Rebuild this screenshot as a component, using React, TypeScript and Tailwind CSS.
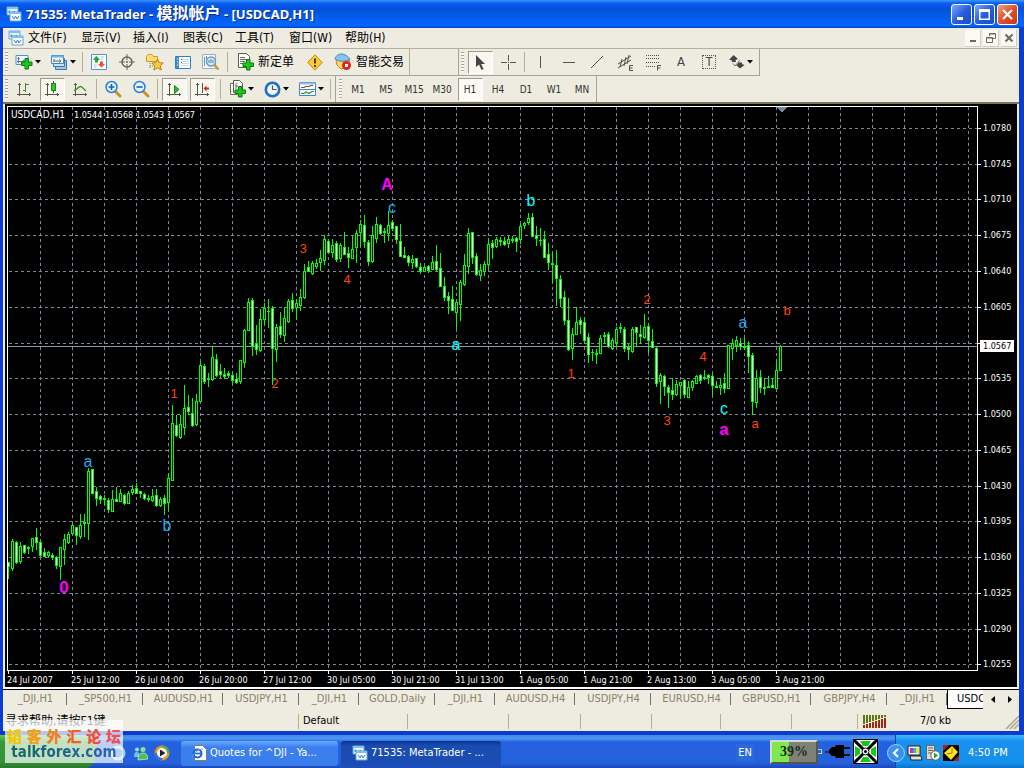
import React from "react";

/* [high, low, bodyTop, bodyBottom, bearish] in chart units, one entry per hour */
type Candle = [number, number, number, number, number];

const CANDLES: Candle[] = [
  [562, 579, 562, 566, 1], [539, 571, 541, 568, 0], [541, 564, 542, 562, 1], [542, 564, 546, 561, 0],
  [545, 554, 545, 552, 1], [546, 554, 547, 548, 1], [538, 552, 538, 546, 0], [528, 550, 537, 542, 1],
  [540, 557, 542, 555, 1], [548, 556, 552, 556, 1], [551, 558, 552, 555, 0], [553, 560, 555, 557, 1],
  [556, 569, 557, 565, 1], [547, 580, 547, 566, 0], [534, 565, 539, 549, 0], [532, 544, 534, 542, 0],
  [523, 535, 525, 533, 0], [527, 545, 527, 535, 1], [514, 539, 525, 536, 0], [514, 537, 522, 523, 1],
  [468, 540, 471, 523, 0], [469, 494, 469, 493, 1], [487, 506, 491, 498, 1], [495, 504, 496, 499, 1],
  [495, 505, 498, 499, 1], [498, 513, 500, 509, 1], [490, 511, 499, 511, 0], [487, 502, 499, 501, 1],
  [489, 502, 493, 501, 0], [494, 505, 495, 503, 1], [491, 504, 493, 503, 0], [485, 495, 489, 492, 0],
  [483, 494, 488, 493, 1], [491, 498, 491, 493, 1], [493, 500, 494, 498, 1], [495, 502, 498, 499, 1],
  [489, 502, 496, 500, 0], [489, 507, 495, 505, 1], [497, 507, 499, 505, 0], [495, 515, 498, 503, 1],
  [473, 510, 478, 502, 0], [405, 481, 423, 480, 0], [415, 437, 425, 435, 1], [415, 439, 424, 437, 0],
  [385, 435, 408, 427, 0], [395, 415, 407, 411, 1], [398, 427, 413, 425, 1], [394, 426, 401, 424, 0],
  [361, 401, 365, 401, 0], [364, 384, 366, 381, 1], [373, 387, 379, 379, 1], [347, 381, 357, 379, 0],
  [354, 377, 359, 375, 1], [364, 378, 371, 374, 1], [368, 379, 374, 376, 1], [371, 378, 373, 375, 1],
  [373, 384, 375, 380, 1], [373, 384, 379, 382, 1], [360, 384, 360, 381, 0], [329, 368, 330, 362, 0],
  [298, 331, 302, 330, 0], [298, 356, 300, 346, 1], [325, 355, 343, 349, 1], [309, 352, 319, 350, 0],
  [303, 325, 308, 319, 0], [299, 328, 311, 311, 1], [306, 385, 308, 348, 1], [324, 362, 327, 349, 0],
  [312, 338, 326, 334, 1], [307, 342, 318, 335, 0], [299, 323, 301, 321, 0], [293, 312, 300, 308, 1],
  [299, 319, 303, 307, 0], [289, 311, 297, 305, 0], [264, 299, 271, 297, 0], [261, 271, 267, 271, 1],
  [261, 275, 263, 273, 0], [259, 269, 263, 266, 0], [250, 271, 258, 262, 0], [235, 265, 239, 260, 0],
  [239, 254, 241, 252, 1], [239, 258, 245, 252, 0], [241, 262, 243, 259, 1], [243, 262, 245, 258, 0],
  [232, 255, 247, 254, 1], [247, 268, 253, 257, 1], [236, 258, 249, 258, 0], [230, 263, 233, 247, 0],
  [220, 247, 224, 232, 0], [215, 248, 225, 241, 1], [240, 266, 242, 261, 1], [226, 263, 235, 261, 0],
  [217, 243, 224, 238, 0], [224, 235, 225, 233, 1], [228, 243, 231, 232, 1], [211, 241, 225, 233, 0],
  [220, 231, 222, 228, 1], [226, 244, 226, 239, 1], [224, 256, 241, 256, 1], [247, 258, 255, 257, 1],
  [255, 266, 256, 262, 1], [255, 269, 259, 262, 0], [258, 268, 258, 266, 1], [263, 274, 267, 271, 1],
  [266, 272, 267, 271, 0], [265, 273, 266, 270, 1], [256, 270, 262, 269, 0], [245, 271, 261, 269, 1],
  [253, 287, 268, 286, 1], [277, 301, 286, 297, 1], [292, 314, 296, 300, 1], [286, 311, 299, 310, 1],
  [302, 329, 302, 312, 0], [280, 321, 282, 304, 0], [254, 286, 265, 284, 0], [228, 274, 233, 266, 0],
  [232, 264, 232, 257, 1], [253, 276, 256, 274, 1], [264, 281, 270, 275, 0], [261, 276, 264, 271, 0],
  [238, 270, 244, 264, 0], [240, 259, 243, 247, 1], [237, 248, 239, 246, 0], [237, 246, 240, 241, 1],
  [237, 246, 241, 244, 1], [236, 248, 239, 243, 0], [236, 243, 239, 240, 1], [237, 252, 238, 241, 1],
  [224, 244, 226, 239, 0], [222, 229, 223, 225, 0], [213, 225, 218, 222, 0], [213, 237, 217, 236, 1],
  [226, 246, 235, 238, 1], [228, 246, 240, 240, 1], [231, 258, 239, 257, 1], [243, 270, 254, 262, 1],
  [252, 283, 263, 264, 1], [250, 306, 265, 278, 1], [275, 307, 279, 298, 1], [291, 325, 297, 320, 1],
  [298, 351, 320, 349, 1], [328, 360, 334, 348, 0], [307, 334, 322, 334, 0], [317, 334, 320, 324, 1],
  [317, 344, 322, 340, 1], [333, 363, 337, 354, 1], [349, 361, 352, 352, 1], [349, 364, 353, 354, 1],
  [335, 353, 338, 353, 0], [332, 344, 335, 336, 1], [332, 348, 334, 346, 1], [338, 350, 340, 348, 0],
  [327, 347, 329, 342, 0], [323, 333, 327, 328, 1], [327, 352, 329, 348, 1], [344, 360, 347, 349, 1],
  [327, 353, 329, 351, 0], [327, 346, 327, 332, 1], [325, 344, 334, 336, 1], [314, 339, 327, 337, 0],
  [323, 353, 326, 340, 1], [329, 348, 341, 347, 1], [347, 387, 348, 383, 1], [373, 404, 375, 381, 0],
  [375, 396, 376, 386, 1], [385, 408, 387, 392, 1], [378, 400, 390, 394, 1], [380, 396, 384, 394, 0],
  [382, 399, 382, 385, 0], [379, 398, 380, 394, 1], [381, 397, 387, 397, 0], [380, 391, 381, 387, 0],
  [375, 384, 376, 383, 0], [374, 384, 375, 380, 1], [370, 380, 377, 378, 1], [374, 384, 375, 377, 1],
  [374, 395, 376, 385, 1], [381, 388, 386, 387, 1], [378, 395, 385, 387, 0], [373, 393, 383, 388, 1],
  [345, 389, 345, 388, 0], [339, 360, 343, 348, 0], [336, 352, 340, 345, 0], [338, 350, 343, 346, 1],
  [338, 350, 346, 347, 1], [341, 373, 345, 356, 1], [353, 415, 355, 401, 1], [370, 408, 378, 402, 0],
  [370, 393, 377, 387, 1], [378, 395, 387, 388, 1], [376, 388, 386, 387, 1], [378, 388, 385, 387, 1],
  [359, 388, 370, 388, 0], [345, 371, 346, 370, 0],
];

const PRICES: [string, number][] = [
  ["1.0780", 128], ["1.0745", 164], ["1.0710", 199], ["1.0675", 235], ["1.0640", 271], ["1.0605", 307],
  ["", 343], ["1.0535", 378], ["1.0500", 414], ["1.0465", 450], ["1.0430", 486], ["1.0395", 521],
  ["1.0360", 557], ["1.0325", 593], ["1.0290", 629], ["1.0255", 664],
];

const TIMES = [
  "24 Jul 2007", "25 Jul 12:00", "26 Jul 04:00", "26 Jul 20:00", "27 Jul 12:00", "30 Jul 05:00", "30 Jul 21:00",
  "31 Jul 13:00", "1 Aug 05:00", "1 Aug 21:00", "2 Aug 13:00", "3 Aug 05:00", "3 Aug 21:00",
];

/* [text, centre x, baseline, size, colour, bold] */
const WAVES: [string, number, number, number, string, boolean][] = [
  ["0", 64, 593, 17, "#ff00ff", true],
  ["a", 88, 467, 16, "#1eaaf0", false],
  ["b", 167, 531, 16, "#1eaaf0", false],
  ["1", 174, 398, 13, "#ff4500", false],
  ["2", 275, 388, 13, "#ff4500", false],
  ["3", 303, 253, 13, "#ff4500", false],
  ["4", 347, 284, 13, "#ff4500", false],
  ["A", 387, 190, 16, "#ff00ff", true],
  ["c", 392, 213, 16, "#1eaaf0", false],
  ["a", 456, 350, 16, "#00ffff", false],
  ["b", 531, 206, 16, "#00ffff", false],
  ["1", 571, 378, 13, "#ff4500", false],
  ["2", 647, 304, 13, "#ff4500", false],
  ["3", 667, 425, 13, "#ff4500", false],
  ["4", 703, 361, 13, "#ff4500", false],
  ["a", 743, 328, 16, "#1eaaf0", false],
  ["b", 787, 315, 13, "#ff4500", false],
  ["a", 755, 428, 13, "#ff4500", false],
  ["c", 724, 414, 16, "#00ffff", false],
  ["a", 724, 435, 17, "#ff00ff", true],
];

function Chart() {
  return (
    <svg
      viewBox="5 104 1012 583"
      className="block h-auto w-full bg-black font-['DejaVu_Sans_Condensed','DejaVu_Sans',sans-serif]"
      role="img"
      aria-label="USDCAD hourly chart"
    >
      <g shapeRendering="crispEdges">
        {PRICES.map(([, y]) => (
          <line key={y} x1="9" x2="977" y1={y + 0.5} y2={y + 0.5} stroke="#778899" strokeDasharray="3 3" />
        ))}
        {Array.from({ length: 30 }, (_, i) => 40 + i * 32).map((x) => (
          <line key={x} x1={x + 0.5} x2={x + 0.5} y1="107" y2="670" stroke="#83839b" strokeDasharray="3 3" />
        ))}
        <line x1="8" x2="977" y1="346.5" y2="346.5" stroke="#8c99a6" />
        <path d="M776 107h12l-6 5z" fill="#778899" />
      </g>
      <g>
        {WAVES.map(([t, x, y, size, color, bold]) => (
          <text
            key={`${t}${x}`}
            x={x}
            y={y}
            fontSize={size}
            fill={color}
            fontWeight={bold ? 700 : 400}
            textAnchor="middle"
            className="font-['Liberation_Sans',Arial,sans-serif]"
          >
            {t}
          </text>
        ))}
      </g>
      <g shapeRendering="crispEdges">
        {CANDLES.map(([hi, lo, top, bottom, bear], i) => {
          const x = 8 + i * 4;
          return (
            <g key={x}>
              <rect x={x} y={hi} width="1" height={Math.max(1, lo - hi)} fill="#00ff00" />
              <rect x={x - 1} y={top} width="3" height={bottom - top + 1} fill="#00ff00" />
              {bottom - top > 1 && (
                <rect x={x} y={top + 1} width="1" height={bottom - top - 1} fill={bear ? "#ffffff" : "#000000"} />
              )}
            </g>
          );
        })}
        <path d="M5 104h2.5v567H5z" fill="#000000" />
        <path d="M7.500 670.500V106.500H977.500V670.500z" fill="none" stroke="#ffffff" />
        {PRICES.map(([, y]) => (
          <rect key={y} x="978" y={y} width="3" height="1" fill="#ffffff" />
        ))}
        {TIMES.map((t, i) => (
          <rect key={t} x={8 + i * 64} y="671" width="1" height="3" fill="#ffffff" />
        ))}
        <rect x="980" y="340" width="34" height="12" fill="#ffffff" />
      </g>
      <g fontSize="9" fill="#ffffff">
        <text x="11" y="118" fontSize="10">USDCAD,H1</text>
        <text x="74" y="118">1.0544 1.0568 1.0543 1.0567</text>
        {PRICES.map(([t, y]) => (
          <text key={y} x="983" y={y + 3}>{t}</text>
        ))}
        <text x="983" y="349" fill="#000000">1.0567</text>
        {TIMES.map((t, i) => (
          <text key={t} x={7 + i * 64} y="683">{t}</text>
        ))}
      </g>
    </svg>
  );
}

/* ---------- icons ---------- */

function AppIcon() {
  return (
    <svg width="16" height="16" viewBox="0 0 16 16" aria-hidden="true" className="shrink-0">
      <path d="M1 1h11v8H1z" fill="#e8f4ff" stroke="#5fa8e0" />
      <path d="M1 1h11v2H1z" fill="#7fc0f0" />
      <path d="M3 7V5h1v2M7 5v2l2-2" stroke="#2f7fc8" fill="none" />
      <path d="M4 6h11v9H4z" fill="#ffffff" stroke="#5fa8e0" />
      <path d="M4 6h11v2H4z" fill="#7fc0f0" />
      <path d="M6 10l2 3 1.500-3 1.500 3 2-3" stroke="#2f7fc8" fill="none" />
    </svg>
  );
}

function Plus({ x = 0, y = 0 }: { x?: number; y?: number }) {
  return (
    <path
      transform={`translate(${x} ${y})`}
      d="M4 .5h3.500v3.500h3.500v3.500h-3.500v3.500H4v-3.500H.5V4H4z"
      fill="#1fc41f"
      stroke="#0b7a12"
    />
  );
}

const ICONS = {
  newChart: (
    <svg width="18" height="16" viewBox="0 0 18 16">
      <path d="M1 1.500h12v9H1z" fill="#eef8ff" stroke="#4d94c4" />
      <path d="M3.500 3v6M2 7.500h8M2.500 4.500h2M8 6l2 1.500L8 9" stroke="#55708a" fill="none" />
      <Plus x={6} y={4} />
    </svg>
  ),
  profiles: (
    <svg width="18" height="17" viewBox="0 0 18 17">
      <path d="M5.500 6.500h11v9h-11z" fill="#9cc8ec" stroke="#3f78b0" />
      <path d="M3.500 4.500h11v8h-11z" fill="#c5e2f8" stroke="#3f78b0" />
      <path d="M1.500 1.500h12v8h-12z" fill="#f2faff" stroke="#3f88c0" />
      <path d="M1.500 1.500h12v2h-12z" fill="#6fb2e4" />
      <path d="M4 5v3M3 7h8M9 5.500L11 7 9 8.500" stroke="#55708a" fill="none" />
    </svg>
  ),
  market: (
    <svg width="16" height="16" viewBox="0 0 16 16">
      <path d="M.5.500h15v15H.5z" fill="#fbfdff" stroke="#4d94d4" />
      <path d="M3 3h2M10 3h3M10 5h2M3 11h3M3 13h2" stroke="#9cc4e4" />
      <path d="M5.500 2L9 6H7v2.500H4V6H2z" fill="#26a426" />
      <path d="M10.500 13.500L7 10h2V7.500h3V10h2z" fill="#f0502a" />
    </svg>
  ),
  data: (
    <svg width="16" height="16" viewBox="0 0 16 16" fill="none" stroke="#666656">
      <circle cx="8" cy="8" r="5" strokeWidth="1.500" />
      <path d="M8 0v6M8 10v6M0 8h6M10 8h6" />
      <path d="M7.500 7.500h1v1h-1z" />
    </svg>
  ),
  navigator: (
    <svg width="18" height="17" viewBox="0 0 18 17">
      <path d="M.5 2.500L2 .5h4l1.500 2h4v5H.5z" fill="#ffe070" stroke="#c89a20" />
      <path d="M4 9v6M4 12h4" stroke="#77776a" strokeDasharray="1 1" />
      <path d="M11.500 5l1.800 3.700 4 .4-3 2.700 1 4.200-3.800-2.200L7.800 16l1-4.200-3-2.700 4-.4z" fill="#ffc83c" stroke="#b9801a" />
    </svg>
  ),
  terminal: (
    <svg width="16" height="15" viewBox="0 0 16 15">
      <path d="M.5 1.500h15v12H.5z" fill="#ffffff" stroke="#2f7fc8" />
      <path d="M1 2h3v11H1z" fill="#2f8fdc" />
      <path d="M2 4h1M2 7h1M2 10h1" stroke="#ffe0a0" strokeWidth="1.500" />
      <path d="M6 4.500h8M6 6.500h8M6 8.500h8M6 10.500h8" stroke="#c4dcf2" />
      <path d="M6 4.500h1M6 7.500h1" stroke="#e03020" />
    </svg>
  ),
  tester: (
    <svg width="18" height="17" viewBox="0 0 18 17">
      <path d="M.5.500h13v14H.5z" fill="#f0f6fc" stroke="#9ab0c8" />
      <path d="M2.500 3v9M4.500 2v4M11.500 3v3" stroke="#7a90a8" />
      <circle cx="9" cy="7.500" r="4.500" fill="#cfe8fb" stroke="#6f9cc4" strokeWidth="1.500" />
      <path d="M7 6v3M9 5v4M11 6v3" stroke="#6a8098" />
      <path d="M12.500 11l4 4.500" stroke="#c89a20" strokeWidth="2.500" />
    </svg>
  ),
  order: (
    <svg width="17" height="18" viewBox="0 0 17 18">
      <path d="M1.500.500h8l3 3v11h-11z" fill="#ffffff" stroke="#55604a" />
      <path d="M3 4.500h5M3 6.500h7M3 8.500h5M3 10.500h3" stroke="#66705a" />
      <Plus x={5.5} y={6} />
    </svg>
  ),
  warn: (
    <svg width="16" height="17" viewBox="0 0 16 17">
      <path d="M8 .8l7.200 7.700L8 16.200.8 8.500z" fill="#ffc930" stroke="#c08a10" strokeLinejoin="round" />
      <path d="M8 4.500v5M8 11v2" stroke="#4a3a10" strokeWidth="2" />
    </svg>
  ),
  expert: (
    <svg width="18" height="18" viewBox="0 0 18 18">
      <path d="M2 8l6-3 8 3-3 6-6 2-4-4z" fill="#ffd860" stroke="#c08a10" />
      <path d="M1 6c1-4 5-6 9-4.500 3 1 5 3 6 5-5 2-10 3-15-.5z" fill="#86c4f0" stroke="#3f88c0" />
      <circle cx="12.500" cy="12.500" r="4.500" fill="#e02818" />
      <path d="M11 11h3v3h-3z" fill="#ffffff" />
    </svg>
  ),
  cursor: (
    <svg width="12" height="17" viewBox="0 0 12 17">
      <path d="M2 1v12l3-2.500L7.500 16l2-1-2.400-5H11z" fill="#444444" />
    </svg>
  ),
  cross: (
    <svg width="16" height="16" viewBox="0 0 16 16" shapeRendering="crispEdges">
      <path d="M8.500 1v6M8.500 10v6M1 8.500h6M10 8.500h6M8 8.500h1" stroke="#555555" />
    </svg>
  ),
  vline: (
    <svg width="16" height="16" viewBox="0 0 16 16" shapeRendering="crispEdges">
      <path d="M7.500 2v12" stroke="#555555" />
    </svg>
  ),
  hline: (
    <svg width="16" height="16" viewBox="0 0 16 16" shapeRendering="crispEdges">
      <path d="M2 8.500h12" stroke="#555555" />
    </svg>
  ),
  trend: (
    <svg width="16" height="16" viewBox="0 0 16 16">
      <path d="M2 14L14 2" stroke="#555555" />
    </svg>
  ),
  channel: (
    <svg width="17" height="17" viewBox="0 0 17 17" fill="none" stroke="#4f4f48">
      <path d="M1 10L14 2M1 14L14 6M5 5l-2 8M9 3l-2 9M12 1l-2 9" />
      <path d="M16 11.500h-3.500v5H16M12.500 14h3" />
    </svg>
  ),
  fibo: (
    <svg width="17" height="17" viewBox="0 0 17 17" fill="none" stroke="#4f4f48">
      <path d="M1 1.500h14M1 4.500h14M1 8.500h14M1 12.500h9" strokeDasharray="1 1" />
      <path d="M16 11.500h-3.500v5M12.500 14h3" />
    </svg>
  ),
  arrows: (
    <svg width="16" height="16" viewBox="0 0 16 16" fill="#444444">
      <path d="M4.500 1L9 5 6.500 6 7 8H3L2.500 6H0z" />
      <path d="M11 14.500L7 11l2-1V8.500h4V10l2.500 1z" />
      <path d="M4 9.500l2 2.500 5-6" fill="none" stroke="#777777" />
    </svg>
  ),
  bars: (
    <svg width="16" height="16" viewBox="0 0 16 16" fill="none" stroke="#555548" shapeRendering="crispEdges">
      <path d="M3.500 2v13M1 13.500h14M2 3.500h3M13.500 12v3" />
      <path d="M9.500 2v9M7 9.500h2M9.500 3.500h3" stroke="#2f9a2f" />
    </svg>
  ),
  candles: (
    <svg width="16" height="16" viewBox="0 0 16 16" fill="none" stroke="#555548" shapeRendering="crispEdges">
      <path d="M3.500 2v13M1 13.500h14M2 3.500h3M13.500 12v3" />
      <path d="M9.500 0v12" stroke="#1a6e1a" />
      <path d="M7.500 2.500h4v7h-4z" fill="#34c434" stroke="#1a8a1a" />
    </svg>
  ),
  line: (
    <svg width="16" height="16" viewBox="0 0 16 16" fill="none" stroke="#555548">
      <path d="M3.500 2v13M1 13.500h14M2 3.500h3M13.500 12v3" />
      <path d="M2 9.500C5 9 6 5.500 8.500 5.500S12 9 14 10" stroke="#2f9a2f" strokeWidth="1.300" />
    </svg>
  ),
  zoomIn: (
    <svg width="18" height="18" viewBox="0 0 18 18">
      <path d="M11 11l5 5" stroke="#c89420" strokeWidth="3" strokeLinecap="round" />
      <circle cx="7.500" cy="7" r="5.500" fill="#dff2ff" stroke="#2f7fd0" strokeWidth="1.500" />
      <path d="M7.500 4v6M4.500 7h6" stroke="#1a60b8" strokeWidth="1.600" />
    </svg>
  ),
  zoomOut: (
    <svg width="18" height="18" viewBox="0 0 18 18">
      <path d="M11 11l5 5" stroke="#c89420" strokeWidth="3" strokeLinecap="round" />
      <circle cx="7.500" cy="7" r="5.500" fill="#dff2ff" stroke="#2f7fd0" strokeWidth="1.500" />
      <path d="M4.500 7h6" stroke="#1a60b8" strokeWidth="1.600" />
    </svg>
  ),
  autoscroll: (
    <svg width="16" height="16" viewBox="0 0 16 16" fill="none" stroke="#555548">
      <path d="M3.500 2v13M1 13.500h14M2 3.500h3M13.500 12v3" />
      <path d="M8.500 4.500l4.500 4-4.500 4z" fill="#34b434" stroke="#1a8a1a" />
    </svg>
  ),
  shift: (
    <svg width="16" height="16" viewBox="0 0 16 16" fill="none" stroke="#555548">
      <path d="M3.500 2v13M1 13.500h14M2 3.500h3M13.500 12v3M8.500 2v10" />
      <path d="M9.500 7.500l3-3v2H15v2h-2.500v2z" fill="#c83018" stroke="none" />
    </svg>
  ),
  indicators: (
    <svg width="17" height="18" viewBox="0 0 17 18">
      <path d="M1.500 3.500h7v11h-7z" fill="#ffffff" stroke="#66705a" />
      <path d="M4.500.500h6l3 3v9h-9z" fill="#ffffff" stroke="#55604a" />
      <path d="M8.500 3c-1.500 0-1.500 1-1.500 2v4M6 6h3" stroke="#66705a" fill="none" />
      <Plus x={5.5} y={6} />
    </svg>
  ),
  clock: (
    <svg width="17" height="17" viewBox="0 0 17 17">
      <circle cx="8.500" cy="8.500" r="6.700" fill="#f2f9ff" stroke="#2070c8" strokeWidth="2.600" />
      <path d="M8.500 4.500v4h4" fill="none" stroke="#4a5560" strokeWidth="1.200" />
    </svg>
  ),
  template: (
    <svg width="17" height="16" viewBox="0 0 17 16">
      <path d="M.5 1.500h16v13H.5z" fill="#f8fcff" stroke="#3f88c0" />
      <path d="M.5 1.500h16v2H.5z" fill="#8cc4ee" />
      <path d="M2 6.500h3l2-1h3l2-1h2" stroke="#b04020" fill="none" strokeWidth="1.200" />
      <path d="M1 8.500h15" stroke="#3f88c0" />
      <path d="M2 12.500h3l2-1.500 3 1.500 3-2h2" stroke="#3a8a3a" fill="none" strokeWidth="1.200" />
    </svg>
  ),
};

type IconName = keyof typeof ICONS;

function Caret() {
  return (
    <svg width="6" height="4" viewBox="0 0 6 4" aria-hidden="true" className="shrink-0">
      <path d="M0 0h6L3 3.500z" fill="#000000" />
    </svg>
  );
}

function Tool({
  icon, label, text, caret, pressed, width = "w-7",
}: { icon: IconName; label: string; text?: string; caret?: boolean; pressed?: boolean; width?: string }) {
  return (
    <button type="button" aria-label={label} className={`flex h-full shrink-0 items-center justify-center ${width}`}>
      <span
        className={`flex h-[23px] items-center justify-center ${
          pressed ? "w-[25px] border border-r-white border-b-white border-l-[#9c9a8c] border-t-[#9c9a8c] bg-[#f8f7f0]" : ""
        } ${caret ? "gap-[2px]" : "gap-1"}`}
      >
        {ICONS[icon]}
        {caret && <Caret />}
        {text && <span className="whitespace-nowrap text-xs">{text}</span>}
      </span>
    </button>
  );
}

function Sep({ width = "w-[5px]" }: { width?: string }) {
  return (
    <span className={`flex h-full shrink-0 items-center justify-center ${width}`}>
      <span className="h-5 w-px bg-[#b5b08e]" />
    </span>
  );
}

function Grip() {
  return <span className="mx-[2px] h-5 w-[3px] shrink-0 bg-[repeating-linear-gradient(#a8a594_0_1px,#f8f7f0_1px_3px)]" />;
}

const MENUS = ["文件(F)", "显示(V)", "插入(I)", "图表(C)", "工具(T)", "窗口(W)", "帮助(H)"];
const MENU_W = ["w-[53px]", "w-[52px]", "w-[50px]", "w-[52px]", "w-[54px]", "w-[56px]", "w-[52px]"];
const FRAMES = ["M1", "M5", "M15", "M30", "H1", "H4", "D1", "W1", "MN"];
const TABS: [string, string][] = [
  ["_DJI,H1", "w-16"], ["_SP500,H1", "w-[76px]"], ["AUDUSD,H1", "w-20"], ["USDJPY,H1", "w-[76px]"],
  ["_DJI,H1", "w-[60px]"], ["GOLD,Daily", "w-[76px]"], ["_DJI,H1", "w-[60px]"], ["AUDUSD,H4", "w-20"],
  ["USDJPY,H4", "w-[76px]"], ["EURUSD,H4", "w-20"], ["GBPUSD,H1", "w-20"], ["GBPJPY,H4", "w-[76px]"], ["_DJI,H1", "w-[60px]"],
];
const STATUS_W = ["w-[101px]", "w-[72px]", "w-[71px]", "w-[69px]", "w-[71px]", "w-[66px]"];

function TitleBar() {
  const box = "flex h-[21px] w-[21px] items-center justify-center rounded-[3px] border border-white";
  return (
    <header className="flex h-7 items-center bg-[linear-gradient(#3c96ff_0,#0a5ef0_12%,#0450dc_30%,#0560f4_75%,#0068ff_92%,#0040c8)] pl-[6px] pr-[6px]">
      <AppIcon />
      <h1 className="ml-1 flex-1 whitespace-nowrap font-['Noto_Sans',sans-serif] text-[13px] font-bold leading-6 text-white [text-shadow:1px_1px_0_#0a2a80]">
        71535: MetaTrader - <span className="font-['Noto_Sans_CJK_SC',sans-serif] text-base leading-none">模拟帐户</span> - [USDCAD,H1]
      </h1>
      <div className="flex gap-[2px]">
        <button type="button" aria-label="Minimize" className={`${box} bg-[linear-gradient(135deg,#7fa8ff,#2a5ee0_50%,#1a4cc8)]`}>
          <svg width="15" height="15" viewBox="0 0 15 15"><path d="M3 10h6v3H3z" fill="#ffffff" /></svg>
        </button>
        <button type="button" aria-label="Maximize" className={`${box} bg-[linear-gradient(135deg,#7fa8ff,#2a5ee0_50%,#1a4cc8)]`}>
          <svg width="15" height="15" viewBox="0 0 15 15"><path d="M2 2h11v11H2zM3.500 5v6.500h8V5z" fill="#ffffff" fillRule="evenodd" /></svg>
        </button>
        <button type="button" aria-label="Close" className={`${box} bg-[linear-gradient(135deg,#f5a088,#e0502a_50%,#c83810)]`}>
          <svg width="15" height="15" viewBox="0 0 15 15"><path d="M3 3l9 9M12 3l-9 9" stroke="#ffffff" strokeWidth="2.200" /></svg>
        </button>
      </div>
    </header>
  );
}

function MenuBar() {
  const box = "flex h-[17px] w-4 items-center justify-center border-b border-r border-[#d0cdbc] bg-[#faf9f4]";
  return (
    <nav className="flex h-[21px] items-center border-b border-[#b4b19e] pl-[5px] pr-[2px]">
      <AppIcon />
      <div className="flex flex-1 pl-1">
        {MENUS.map((m, i) => (
          <button key={m} type="button" className={`shrink-0 whitespace-nowrap text-left text-xs leading-[18px] ${MENU_W[i]}`}>
            {m}
          </button>
        ))}
      </div>
      <div className="flex gap-[2px]">
        <button type="button" aria-label="Minimize chart" className={box}>
          <svg width="10" height="10" viewBox="0 0 10 10"><path d="M2 7h6v2H2z" fill="#6c6a58" /></svg>
        </button>
        <button type="button" aria-label="Restore chart" className={box}>
          <svg width="10" height="10" viewBox="0 0 10 10" fill="none" stroke="#6c6a58">
            <path d="M3.500 3V.5h6v5H7M3 1h7M.5 4.500h6v5h-6zM0 5h7" />
          </svg>
        </button>
        <button type="button" aria-label="Close chart" className={box}>
          <svg width="10" height="10" viewBox="0 0 10 10"><path d="M1.500 1.500l7 7M8.500 1.500l-7 7" stroke="#6c6a58" strokeWidth="2" /></svg>
        </button>
      </div>
    </nav>
  );
}

function Toolbars() {
  return (
    <div className="border-b-2 border-[#77755c]">
      <div className="flex">
        <div className="flex h-[27px] items-center border-b border-r border-[#a5a2a0]">
          <Grip />
          <Tool icon="newChart" label="New chart" caret width="w-9" />
          <Tool icon="profiles" label="Profiles" caret width="w-[34px]" />
          <Sep />
          <Tool icon="market" label="Market watch" />
          <Tool icon="data" label="Data window" />
          <Tool icon="navigator" label="Navigator" />
          <Tool icon="terminal" label="Terminal" />
          <Tool icon="tester" label="Strategy tester" />
          <Sep />
          <Tool icon="order" label="新定单" text="新定单" width="w-[71px]" />
          <Tool icon="warn" label="Meta editor" />
          <Tool icon="expert" label="智能交易" text="智能交易" width="w-20" />
          <span className="h-full w-[50px] shrink-0 border-l border-r border-l-[#b5b08e] border-r-[#a5a2a0]" />
          <Grip />
          <Tool icon="cursor" label="Cursor" pressed />
          <Tool icon="cross" label="Crosshair" />
          <Sep />
          <Tool icon="vline" label="Vertical line" />
          <Tool icon="hline" label="Horizontal line" />
          <Tool icon="trend" label="Trendline" />
          <Tool icon="channel" label="Equidistant channel" />
          <Tool icon="fibo" label="Fibonacci retracement" />
          <button type="button" className="h-full w-7 shrink-0 text-[13px] text-[#444444]">A</button>
          <button type="button" aria-label="Text label" className="flex h-full w-7 shrink-0 items-center justify-center">
            <span className="flex h-[14px] w-[14px] items-center justify-center border border-dotted border-[#555555] text-xs leading-none text-[#444444]">T</span>
          </button>
          <Tool icon="arrows" label="Arrows" caret width="w-9" />
        </div>
      </div>
      <div className="flex">
        <div className="flex h-[26px] items-center border-r border-[#a5a2a0]">
          <Grip />
          <Tool icon="bars" label="Bar chart" />
          <Tool icon="candles" label="Candlesticks" pressed />
          <Tool icon="line" label="Line chart" />
          <Sep />
          <Tool icon="zoomIn" label="Zoom in" />
          <Tool icon="zoomOut" label="Zoom out" />
          <Sep />
          <Tool icon="autoscroll" label="Auto scroll" pressed />
          <Tool icon="shift" label="Chart shift" pressed />
          <Sep width="w-2" />
          <Tool icon="indicators" label="Indicators" caret width="w-[35px]" />
          <Tool icon="clock" label="Periods" caret width="w-[35px]" />
          <Tool icon="template" label="Templates" caret width="w-[35px]" />
          <Sep width="w-[3px]" />
          <span className="ml-[3px] h-full w-px shrink-0 bg-[#a5a2a0]" />
          <span className="w-px" />
          <Grip />
          {FRAMES.map((f) => (
            <button key={f} type="button" className="flex h-full w-7 shrink-0 items-center justify-center text-[10px] text-[#333333]">
              <span
                className={`flex h-[23px] w-[25px] items-center justify-center ${
                  f === "H1" ? "border border-r-white border-b-white border-l-[#9c9a8c] border-t-[#9c9a8c] bg-[#fbfaf5]" : ""
                }`}
              >
                {f}
              </span>
            </button>
          ))}
        </div>
      </div>
    </div>
  );
}

function ChartTabs() {
  return (
    <div className="flex h-[22px] items-start border-t border-black text-[11px]">
      <div className="flex min-w-0 flex-1 overflow-hidden">
        {TABS.map(([t, w], i) => (
          <button key={i} type="button" className={`flex h-[18px] shrink-0 items-center justify-center pl-[2px] text-[#8a7f68] ${w}`}>
            <span className="flex-1 whitespace-nowrap">{t}</span>
            <span className="h-3 w-px bg-[#77736a]" />
          </button>
        ))}
        <button type="button" className="h-[19px] min-w-0 flex-1 overflow-hidden whitespace-nowrap border-b border-l border-black bg-white pl-[9px] text-left text-black">
          USDCAD,H1
        </button>
      </div>
      <div className="flex h-[18px] w-9 shrink-0 items-center justify-between pl-2 pr-[7px]">
        <button type="button" aria-label="Scroll tabs left">
          <svg width="4" height="7" viewBox="0 0 4 7"><path d="M4 0v7L0 3.500z" /></svg>
        </button>
        <button type="button" aria-label="Scroll tabs right">
          <svg width="4" height="7" viewBox="0 0 4 7"><path d="M0 0v7l4-3.500z" /></svg>
        </button>
      </div>
    </div>
  );
}

function StatusBar() {
  return (
    <div className="flex h-5 items-center text-[11px]">
      <span className="w-[295px] shrink-0 pl-[2px] text-xs">寻求帮助,请按F1键</span>
      <span className="flex h-[15px] w-[109px] shrink-0 items-center border-l border-[#b5b08e] pl-1">Default</span>
      {STATUS_W.map((w, i) => (
        <span key={i} className={`h-[15px] shrink-0 border-l border-[#b5b08e] ${w}`} />
      ))}
      <span className="flex h-[15px] flex-1 items-center border-l border-[#b5b08e] pl-[5px]">
        <svg width="24" height="13" viewBox="0 0 24 13" aria-hidden="true" shapeRendering="crispEdges">
          {Array.from({ length: 8 }, (_, i) => (
            <g key={i}>
              <rect x={i * 3} y="0" width="2" height={9 - i} fill="#5a7a10" />
              <rect x={i * 3} y={10 - i} width="2" height={3 + i} fill="#a02810" />
            </g>
          ))}
        </svg>
        <span className="ml-[33px] flex-1">7/0 kb</span>
        <svg width="14" height="14" viewBox="0 0 14 14" aria-hidden="true" className="self-end">
          <path d="M1 14L14 1M5 14l9-9M9 14l5-5" stroke="#aaa78e" strokeWidth="1.500" />
        </svg>
      </span>
    </div>
  );
}

function Taskbar() {
  return (
    <footer className="flex h-[33px] items-stretch bg-[linear-gradient(#4a80d8_0,#4a9af8_10%,#2560e0_22%,#2560dc_85%,#1a48b8)] text-[11px] text-white">
      <button
        type="button"
        aria-label="Start"
        className="w-24 shrink-0 rounded-r-xl bg-[linear-gradient(#6cc060_0,#3a9a38_20%,#35923a_80%,#2a7a2a)]"
      />
      <div className="flex w-[85px] shrink-0 items-center gap-[6px] pl-[13px] pt-[3px]">
        <svg width="18" height="18" viewBox="0 0 18 18" aria-hidden="true">
          <circle cx="9" cy="9" r="6" fill="none" stroke="#9fd0ff" strokeWidth="3" />
        </svg>
        <svg width="15" height="15" viewBox="0 0 15 15" aria-hidden="true">
          <circle cx="4" cy="3.500" r="2" fill="#9fdcff" />
          <path d="M1 11c0-4 1-5 3-5s3 2 3 5z" fill="#6fc0f0" />
          <circle cx="10" cy="3.500" r="2.500" fill="#8fe08f" />
          <path d="M5 14c0-5 2-7 5-7s5 2 5 6z" fill="#4cc44c" stroke="#e8ffe8" strokeWidth=".6" />
        </svg>
        <svg width="16" height="16" viewBox="0 0 16 16" aria-hidden="true">
          <circle cx="8" cy="8" r="7.500" fill="#f09020" />
          <path d="M8 .5A7.500 7.500 0 0 1 15.500 8H8z" fill="#50b040" />
          <path d="M8 15.500A7.500 7.500 0 0 1 .5 8H8z" fill="#3070e0" />
          <circle cx="8" cy="8" r="5" fill="#ffffff" />
          <path d="M6 4.500L11.500 8 6 11.500z" fill="#202020" />
        </svg>
      </div>
      <div className="flex items-center gap-[3px] pt-[3px]">
        <button type="button" className="flex h-[25px] w-[157px] items-center gap-[3px] rounded-[3px] bg-[linear-gradient(#68a8ff,#3c80f0_25%,#3a7cec)] pl-[10px]">
          <svg width="16" height="16" viewBox="0 0 16 16" aria-hidden="true">
            <path d="M3.500.500h8l4 4v11h-12z" fill="#ffffff" stroke="#7a7a7a" />
            <circle cx="6.500" cy="8.500" r="4" fill="none" stroke="#1a60d8" strokeWidth="2" />
            <path d="M3 8.500h7" stroke="#1a60d8" strokeWidth="1.600" />
            <path d="M1 12C4 6 9 4 12 4" stroke="#60a8f0" fill="none" />
          </svg>
          Quotes for ^DJI - Ya...
        </button>
        <button type="button" className="flex h-[25px] w-[160px] items-center gap-[3px] rounded-[3px] bg-[linear-gradient(#0c3490,#1a4cb0_20%,#1a4cb4)] pl-[11px]">
          <AppIcon />
          71535: MetaTrader - ...
        </button>
      </div>
      <div className="flex flex-1 items-center justify-end">
        <span className="mt-[3px] flex h-[18px] w-[18px] items-center justify-center bg-[#2a6ad8]">EN</span>
        <span className="ml-4 flex h-6 w-12 items-center justify-center border-2 border-[#d8d8d8] border-b-[#55554a] border-r-[#55554a] bg-[linear-gradient(to_right,#7ee850_39%,#7f8078_39%)] font-['Liberation_Serif',serif] text-sm font-bold text-[#1a2a1a]">
          39%
        </span>
        <span className="h-[5px] w-1 border border-l-0 border-[#c8c8b8]" />
        <svg width="26" height="16" viewBox="0 0 26 16" aria-hidden="true" className="ml-[3px]">
          <path d="M0 8h4" stroke="#303030" strokeWidth="2" />
          <path d="M4 6l3-3h3l1-2h8v13h-8l-1-2H7L4 9z" fill="#000000" />
          <path d="M19 4h6M19 11h6" stroke="#101010" strokeWidth="2" />
        </svg>
        <svg width="25" height="25" viewBox="0 0 25 25" aria-hidden="true" className="ml-[2px]">
          <path d="M0 0h25v25H0z" fill="#000000" />
          <path d="M3 1h19l-7 8h-5zM3 24h19l-7-8h-5zM1 3v19l8-7v-5zM24 3v19l-8-7v-5z" fill="#ffffff" />
          <path d="M7 2h11l-3 5h-5zM7 23h11l-3-5h-5zM2 7v11l5-3v-5zM23 7v11l-5-3v-5z" fill="#10c820" />
          <path d="M3 3l19 19M22 3L3 22" stroke="#000000" strokeWidth="3" />
          <circle cx="12.500" cy="12.500" r="3.500" fill="#ffffff" stroke="#000000" />
          <circle cx="12.500" cy="12.500" r="1.500" fill="#000000" />
        </svg>
      </div>
      <div className="ml-[17px] flex w-[129px] shrink-0 items-center border-l border-[#0a48a8] bg-[linear-gradient(#40b8ff_0,#1890f0_20%,#1490ec_85%,#0c70c8)] pt-[3px]">
        <button type="button" aria-label="Show hidden icons" className="-ml-[9px] shrink-0">
          <svg width="18" height="18" viewBox="0 0 18 18">
            <circle cx="9" cy="9" r="8.500" fill="#3a90f0" stroke="#9fd0ff" />
            <path d="M11 5L7 9l4 4" stroke="#ffffff" strokeWidth="2.200" fill="none" />
          </svg>
        </button>
        <svg width="16" height="16" viewBox="0 0 16 16" aria-hidden="true" className="ml-[2px] shrink-0">
          <path d="M1 1h12v9H1z" fill="#f4f4ec" stroke="#202020" />
          <path d="M3 3h3v5H3z" fill="#e020c0" />
          <path d="M6 3h3v5H6z" fill="#20b8e0" />
          <path d="M9 3h3v5H9z" fill="#f0e020" />
          <path d="M3 11h11l1 4H4z" fill="#e4e4dc" stroke="#202020" />
        </svg>
        <svg width="16" height="16" viewBox="0 0 16 16" aria-hidden="true" className="ml-[2px] shrink-0">
          <path d="M1.500.500h8v14h-8z" fill="#dcdcd4" stroke="#66665c" />
          <path d="M3 3h5M3 5.500h5M3 8h5" stroke="#66665c" />
          <circle cx="10.500" cy="10.500" r="4.700" fill="#ffffff" stroke="#555555" />
          <path d="M9 7.500l4 3-4 3z" fill="#18a030" />
        </svg>
        <svg width="16" height="16" viewBox="0 0 16 16" aria-hidden="true" className="ml-[2px] shrink-0">
          <path d="M0 0h16v16H0z" fill="#000000" />
          <path d="M0 0l6 0L0 6zM16 16h-6l6-6z" fill="#b02010" />
          <path d="M9 1l6 6-7 8-7-7z" fill="#ffe020" />
          <path d="M4 9l5-1V3" stroke="#a08000" fill="none" />
        </svg>
        <time className="ml-[9px] whitespace-nowrap">4:50 PM</time>
      </div>
    </footer>
  );
}

function Watermark() {
  return (
    <div className="absolute bottom-[5px] left-[5px] flex h-[43px] w-[118px] flex-col items-center justify-end overflow-hidden bg-white/70 pb-[3px]">
      <div className="flex w-full justify-between px-[2px] font-['Noto_Sans_CJK_SC',sans-serif] text-[15px] font-black leading-4">
        <span className="text-[#f0c800]">韬</span>
        <span className="text-[#f0a010]">客</span>
        <span className="text-[#f08020]">外</span>
        <span className="text-[#f06020]">汇</span>
        <span className="text-[#f05030]">论</span>
        <span className="text-[#f05058]">坛</span>
      </div>
      <div className="bg-[linear-gradient(to_right,#12695a,#2a62b8)] bg-clip-text text-[15px] font-bold leading-4 text-transparent">
        talkforex.com
      </div>
    </div>
  );
}

export default function App() {
  return (
    <div className="relative flex min-h-screen flex-col bg-[#1450dc] font-['DejaVu_Sans_Condensed','DejaVu_Sans','Noto_Sans_CJK_SC',sans-serif] text-black">
      <TitleBar />
      <main className="flex-1 border-b-4 border-l-[3px] border-r-[5px] border-[#0a3cd0] bg-[#eeebe0]">
        <MenuBar />
        <Toolbars />
        <div className="border-b-2 border-white px-[2px]">
          <Chart />
        </div>
        <ChartTabs />
        <StatusBar />
      </main>
      <Taskbar />
      <Watermark />
    </div>
  );
}
